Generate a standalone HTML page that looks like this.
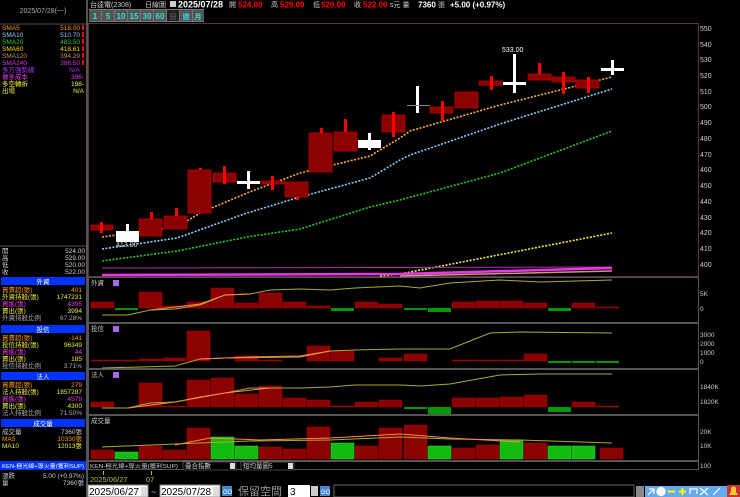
<!DOCTYPE html>
<html><head><meta charset="utf-8"><style>
html,body{margin:0;padding:0;background:#000;width:740px;height:497px;overflow:hidden}
svg text{font-family:"Liberation Sans","Noto Sans CJK TC",sans-serif}
</style></head><body>
<svg width="740" height="497" xmlns="http://www.w3.org/2000/svg" font-size="7">
<rect width="740" height="497" fill="#000"/>
<rect x="86" y="0" width="2" height="497" fill="#555"/>
<text x="43" y="13" fill="#aaa" text-anchor="middle" font-size="7">2025/07/28(一)</text>
<line x1="0" y1="24" x2="86" y2="24" stroke="#555"/>
<g font-size="6.5">
<text x="2" y="30" fill="#f90">SMA5</text><text x="80" y="30" fill="#f90" text-anchor="end">518.00</text>
<text x="2" y="37" fill="#8cf">SMA10</text><text x="80" y="37" fill="#8cf" text-anchor="end">510.70</text>
<text x="2" y="44" fill="#2c2">SMA20</text><text x="80" y="44" fill="#2c2" text-anchor="end">483.50</text>
<text x="2" y="51" fill="#fd0">SMA60</text><text x="80" y="51" fill="#fd0" text-anchor="end">418.61</text>
<text x="2" y="58" fill="#c86">SMA120</text><text x="80" y="58" fill="#c86" text-anchor="end">394.29</text>
<text x="2" y="65" fill="#d3d">SMA240</text><text x="80" y="65" fill="#d3d" text-anchor="end">388.50</text>
<text x="2" y="72" fill="#a3f">多方強勢線</text><text x="80" y="72" fill="#a3f" text-anchor="end">N/A</text>
<text x="2" y="79" fill="#e3e">做多成本</text><text x="84" y="79" fill="#e3e" text-anchor="end">396-</text>
<text x="2" y="86" fill="#ee3">多空轉折</text><text x="84" y="86" fill="#ee3" text-anchor="end">198-</text>
<text x="2" y="93" fill="#ee3">出場</text><text x="84" y="93" fill="#ee3" text-anchor="end">N/A</text>
<g fill="#f00"><rect x="82" y="25" width="2" height="5"/><rect x="82" y="32" width="2" height="5"/><rect x="82" y="39" width="2" height="5"/><rect x="82" y="46" width="2" height="5"/><rect x="82" y="53" width="2" height="5"/><rect x="82" y="60" width="2" height="5"/></g>
</g>
<line x1="0" y1="246" x2="86" y2="246" stroke="#555"/>
<g font-size="6.5" fill="#ccc">
<text x="2" y="253">開</text><text x="85" y="253" text-anchor="end">524.00</text>
<text x="2" y="260">高</text><text x="85" y="260" text-anchor="end">529.00</text>
<text x="2" y="267">低</text><text x="85" y="267" text-anchor="end">520.00</text>
<text x="2" y="274">收</text><text x="85" y="274" text-anchor="end">522.00</text>
</g>
<g font-size="6.5">
<rect x="1" y="277" width="84" height="8" fill="#0033ff"/><text x="43" y="284" fill="#fff" text-anchor="middle">外資</text>
<text x="2" y="292" fill="#f90">買賣超(張)</text><text x="82" y="292" fill="#f90" text-anchor="end">401</text>
<text x="2" y="299" fill="#ee3">外資持股(張)</text><text x="82" y="299" fill="#ee3" text-anchor="end">1747231</text>
<text x="2" y="306" fill="#e3e">買進(張)</text><text x="82" y="306" fill="#e3e" text-anchor="end">4395</text>
<text x="2" y="313" fill="#ee3">賣出(張)</text><text x="82" y="313" fill="#ee3" text-anchor="end">3994</text>
<text x="2" y="320" fill="#aaa">外資持股比例</text><text x="82" y="320" fill="#aaa" text-anchor="end">67.28%</text>
<rect x="1" y="325" width="84" height="8" fill="#0033ff"/><text x="43" y="332" fill="#fff" text-anchor="middle">投信</text>
<text x="2" y="340" fill="#f90">買賣超(張)</text><text x="82" y="340" fill="#f90" text-anchor="end">-141</text>
<text x="2" y="347" fill="#ee3">投信持股(張)</text><text x="82" y="347" fill="#ee3" text-anchor="end">96349</text>
<text x="2" y="354" fill="#e3e">買進(張)</text><text x="82" y="354" fill="#e3e" text-anchor="end">44</text>
<text x="2" y="361" fill="#ee3">賣出(張)</text><text x="82" y="361" fill="#ee3" text-anchor="end">185</text>
<text x="2" y="368" fill="#aaa">投信持股比例</text><text x="82" y="368" fill="#aaa" text-anchor="end">3.71%</text>
<rect x="1" y="372" width="84" height="8" fill="#0033ff"/><text x="43" y="379" fill="#fff" text-anchor="middle">法人</text>
<text x="2" y="387" fill="#f90">買賣超(張)</text><text x="82" y="387" fill="#f90" text-anchor="end">279</text>
<text x="2" y="394" fill="#ee3">法人持股(張)</text><text x="82" y="394" fill="#ee3" text-anchor="end">1857287</text>
<text x="2" y="401" fill="#e3e">買進(張)</text><text x="82" y="401" fill="#e3e" text-anchor="end">4579</text>
<text x="2" y="408" fill="#ee3">賣出(張)</text><text x="82" y="408" fill="#ee3" text-anchor="end">4300</text>
<text x="2" y="415" fill="#aaa">法人持股比例</text><text x="82" y="415" fill="#aaa" text-anchor="end">71.50%</text>
<rect x="1" y="419" width="84" height="8" fill="#0033ff"/><text x="43" y="426" fill="#fff" text-anchor="middle">成交量</text>
<text x="2" y="434" fill="#ccc">成交量</text><text x="82" y="434" fill="#ccc" text-anchor="end">7360張</text>
<text x="2" y="441" fill="#f90">MA5</text><text x="82" y="441" fill="#f90" text-anchor="end">10330張</text>
<text x="2" y="448" fill="#ee3">MA10</text><text x="82" y="448" fill="#ee3" text-anchor="end">12013張</text>
<rect x="0" y="461" width="86" height="9" fill="#0033ff"/><text x="2" y="468" fill="#fff" font-size="5.5" textLength="82" lengthAdjust="spacingAndGlyphs">KEN-極光線+導火量(獲利SUP)</text>
<text x="2" y="478" fill="#ccc">漲跌</text><text x="84" y="478" fill="#ccc" text-anchor="end">5.00 (+0.97%)</text>
<text x="2" y="485" fill="#ccc">量</text><text x="84" y="485" fill="#ccc" text-anchor="end">7360張</text>
</g>
<g font-size="7">
<text x="90" y="7" fill="#ccc">台達電(2308)</text>
<text x="145" y="7" fill="#ccc">日線圖</text>
<rect x="170" y="1" width="6" height="6" fill="#ccc"/>
<text x="178" y="7.5" fill="#fff" font-weight="bold" font-size="9">2025/07/28</text>
<text x="229" y="7" fill="#ccc">開</text><text x="238" y="7.5" fill="#f00" font-weight="bold" font-size="8">524.00</text>
<text x="271" y="7" fill="#ccc">高</text><text x="280" y="7.5" fill="#f00" font-weight="bold" font-size="8">529.00</text>
<text x="313" y="7" fill="#ccc">低</text><text x="321" y="7.5" fill="#f00" font-weight="bold" font-size="8">520.00</text>
<text x="354" y="7" fill="#ccc">收</text><text x="363" y="7.5" fill="#f00" font-weight="bold" font-size="8">522.00</text>
<text x="390" y="7" fill="#ccc">s元 量</text><text x="418" y="7.5" fill="#fff" font-weight="bold" font-size="8">7360</text>
<text x="438" y="7" fill="#ccc">張</text><text x="450" y="7.5" fill="#fff" font-weight="bold" font-size="8">+5.00 (+0.97%)</text>
</g>
<g font-size="8" font-weight="bold" fill="#3dd">
<rect x="89" y="9" width="115" height="13" fill="#777"/>
<rect x="89" y="10" width="12" height="11" fill="#555"/><text x="95" y="19" text-anchor="middle">1</text>
<rect x="102" y="10" width="12" height="11" fill="#555"/><text x="108" y="19" text-anchor="middle">5</text>
<rect x="115" y="10" width="12" height="11" fill="#555"/><text x="121" y="19" text-anchor="middle">10</text>
<rect x="128" y="10" width="12" height="11" fill="#555"/><text x="134" y="19" text-anchor="middle">15</text>
<rect x="141" y="10" width="12" height="11" fill="#555"/><text x="147" y="19" text-anchor="middle">30</text>
<rect x="154" y="10" width="12" height="11" fill="#555"/><text x="160" y="19" text-anchor="middle">60</text>
<rect x="167" y="10" width="12" height="11" fill="#222"/><text x="173" y="19" text-anchor="middle" fill="#555" font-size="7">日</text>
<rect x="180" y="10" width="12" height="11" fill="#555"/><text x="186" y="19" text-anchor="middle" font-size="7">週</text>
<rect x="193" y="10" width="11" height="11" fill="#555"/><text x="198" y="19" text-anchor="middle" font-size="7">月</text>
</g>
<rect x="88.5" y="23.5" width="610" height="253" fill="none" stroke="#553344"/>
<g font-size="7" fill="#ccc">
<text x="700" y="31">550</text><text x="700" y="47">540</text><text x="700" y="62">530</text><text x="700" y="78">520</text><text x="700" y="94">510</text><text x="700" y="109">500</text><text x="700" y="125">490</text><text x="700" y="141">480</text><text x="700" y="157">470</text><text x="700" y="172">460</text><text x="700" y="188">450</text><text x="700" y="204">440</text><text x="700" y="220">430</text><text x="700" y="235">420</text><text x="700" y="251">410</text><text x="700" y="267">400</text>
</g>
<g fill="none" stroke-width="1.6" stroke-dasharray="2,1.5">
<polyline stroke="#fa4" points="102,237 177,227 200,213 247,193 300,173 370,156 400,138 410,131 500,105 612,77"/>
<polyline stroke="#8cf" points="102,249 177,238 247,213 300,197 370,178 400,160 410,155 500,124 612,89"/>
<polyline stroke="#2c2" points="102,261 177,251 247,237 300,229 370,207 400,200 500,173 612,131"/>
<polyline stroke="#ee3" points="380,276 400,274 612,233"/>
</g>
<line x1="102" y1="268" x2="612" y2="267" stroke="#a3a" stroke-width="1"/>
<polyline points="102,275 400,274 612,268" stroke="#e3e" stroke-width="2.5" fill="none"/>
<polyline points="400,276 612,271" stroke="#c97" stroke-width="1.5" fill="none"/>
<g fill="#8b0000" stroke="#b00" stroke-width="0.8">
<rect x="91" y="225" width="22" height="5"/>
<rect x="139" y="219" width="23" height="17"/>
<rect x="164" y="216" width="23" height="13"/>
<rect x="188" y="170" width="23" height="43"/>
<rect x="213" y="173" width="23" height="9"/>
<rect x="261" y="181" width="23" height="3"/>
<rect x="285" y="182" width="23" height="15"/>
<rect x="309" y="133" width="23" height="39"/>
<rect x="334" y="132" width="23" height="19"/>
<rect x="382" y="115" width="23" height="17"/>
<rect x="430" y="107" width="23" height="6"/>
<rect x="455" y="92" width="23" height="16"/>
<rect x="479" y="81" width="23" height="4"/>
<rect x="528" y="74" width="23" height="6"/>
<rect x="552" y="77" width="23" height="5"/>
<rect x="576" y="80" width="23" height="8"/>
</g>
<g fill="#f00">
<rect x="100" y="222" width="3" height="11"/>
<rect x="150" y="212" width="3" height="7"/>
<rect x="175" y="208" width="3" height="8"/>
<rect x="199" y="168" width="3" height="2"/>
<rect x="223" y="166" width="3" height="18"/>
<rect x="271" y="176" width="3" height="14"/>
<rect x="296" y="197" width="3" height="3"/>
<rect x="320" y="128" width="3" height="5"/>
<rect x="344" y="119" width="3" height="13"/>
<rect x="392" y="112" width="3" height="25"/>
<rect x="441" y="101" width="3" height="20"/>
<rect x="490" y="76" width="3" height="14"/>
<rect x="538" y="63" width="3" height="11"/>
<rect x="562" y="72" width="3" height="22"/>
<rect x="587" y="77" width="3" height="16"/>
</g>
<g fill="#fff">
<rect x="116" y="231" width="23" height="11"/><rect x="126" y="224" width="3" height="7"/>
<rect x="237" y="181" width="23" height="3"/><rect x="247" y="171" width="3" height="18"/>
<rect x="358" y="140" width="23" height="8"/><rect x="368" y="133" width="3" height="17"/>
<rect x="416" y="86" width="3" height="27"/>
<rect x="503" y="82" width="23" height="3"/><rect x="513" y="54" width="3" height="39"/>
<rect x="601" y="68" width="23" height="3"/><rect x="611" y="60" width="3" height="15"/>
</g>
<rect x="407" y="105" width="23" height="1" fill="#888"/>
<text x="116" y="247" fill="#ccc" font-size="7">413.00</text>
<text x="502" y="52" fill="#fff" font-size="7">533.00</text>
<g fill="none" stroke="#555">
<rect x="88.5" y="277.5" width="610" height="45"/>
<rect x="88.5" y="323.5" width="610" height="45"/>
<rect x="88.5" y="369.5" width="610" height="45"/>
<rect x="88.5" y="415.5" width="610" height="45"/>
<rect x="88.5" y="461.5" width="610" height="8"/>
</g>
<g font-size="6.5" fill="#ccc">
<text x="91" y="285">外資</text><text x="91" y="331">投信</text><text x="91" y="377">法人</text><text x="91" y="423">成交量</text>
<text x="700" y="296">5K</text><text x="700" y="311">0</text>
<text x="700" y="337">3000</text><text x="700" y="346">2000</text><text x="700" y="355">1000</text><text x="700" y="364">0</text>
<text x="700" y="389">1840K</text><text x="700" y="404">1820K</text>
<text x="700" y="434">20K</text><text x="700" y="448">10K</text><text x="700" y="468">100</text>
</g>
<g fill="#a6e"><rect x="113" y="280" width="6" height="6"/><rect x="113" y="326" width="6" height="6"/><rect x="113" y="372" width="6" height="6"/></g>
<g fill="#8b0000" stroke="#a00" stroke-width="0.5">
<rect x="91" y="302" width="23" height="6"/><rect x="139" y="292" width="23" height="16"/><rect x="163" y="306" width="23" height="2"/><rect x="187" y="302" width="23" height="6"/><rect x="211" y="288" width="23" height="20"/><rect x="235" y="303" width="23" height="5"/><rect x="259" y="293" width="23" height="15"/><rect x="283" y="302" width="23" height="6"/><rect x="307" y="306" width="23" height="2"/><rect x="355" y="302" width="23" height="6"/><rect x="379" y="304" width="23" height="4"/><rect x="452" y="302" width="23" height="6"/><rect x="476" y="301" width="23" height="7"/><rect x="500" y="301" width="23" height="7"/><rect x="524" y="303" width="23" height="5"/><rect x="572" y="303" width="23" height="5"/><rect x="596" y="307" width="23" height="1"/>
</g>
<g fill="#090"><rect x="115" y="308" width="23" height="2"/><rect x="331" y="308" width="23" height="3"/><rect x="404" y="308" width="23" height="2"/><rect x="428" y="308" width="23" height="4"/><rect x="548" y="308" width="23" height="3"/></g>
<polyline fill="none" stroke="#aa3" points="102,315 128,315 150,310 175,309 200,305 225,295 250,294 270,290 300,289 330,290 355,288 400,286 420,288 450,283 500,280 540,282 612,280"/>
<polyline fill="none" stroke="#f84" points="150,310 200,304 225,295 250,294"/>
<g fill="#8b0000" stroke="#a00" stroke-width="0.5">
<rect x="91" y="360" width="23" height="1"/><rect x="115" y="360" width="23" height="1"/><rect x="139" y="359" width="23" height="2"/><rect x="163" y="358" width="23" height="3"/><rect x="187" y="331" width="23" height="30"/><rect x="235" y="356" width="23" height="5"/><rect x="259" y="360" width="23" height="1"/><rect x="307" y="346" width="23" height="15"/><rect x="331" y="351" width="23" height="10"/><rect x="379" y="358" width="23" height="3"/><rect x="404" y="354" width="23" height="7"/><rect x="452" y="360" width="23" height="1"/><rect x="476" y="360" width="23" height="1"/><rect x="500" y="360" width="23" height="1"/><rect x="524" y="354" width="23" height="7"/>
</g>
<g fill="#090"><rect x="548" y="361" width="23" height="2"/><rect x="572" y="361" width="23" height="2"/><rect x="596" y="361" width="23" height="2"/></g>
<polyline fill="none" stroke="#aa3" points="102,368 175,366 200,359 225,358 300,357 330,351 355,350 400,349 450,349 490,333 520,332 612,333"/>
<polyline fill="none" stroke="#f84" points="200,359 250,357 300,356 330,351"/>
<g fill="#8b0000" stroke="#a00" stroke-width="0.5">
<rect x="91" y="402" width="23" height="5"/><rect x="139" y="383" width="23" height="24"/><rect x="163" y="406" width="23" height="1"/><rect x="187" y="380" width="23" height="27"/><rect x="211" y="378" width="23" height="29"/><rect x="235" y="394" width="23" height="13"/><rect x="259" y="386" width="23" height="21"/><rect x="283" y="398" width="23" height="9"/><rect x="307" y="400" width="23" height="7"/><rect x="331" y="406" width="23" height="1"/><rect x="355" y="402" width="23" height="5"/><rect x="379" y="400" width="23" height="7"/><rect x="452" y="398" width="23" height="9"/><rect x="476" y="398" width="23" height="9"/><rect x="500" y="397" width="23" height="10"/><rect x="524" y="395" width="23" height="12"/><rect x="572" y="402" width="23" height="5"/><rect x="596" y="406" width="23" height="1"/>
</g>
<g fill="#090"><rect x="404" y="407" width="23" height="2"/><rect x="428" y="407" width="23" height="7"/><rect x="548" y="407" width="23" height="5"/></g>
<polyline fill="none" stroke="#aa3" points="102,408 128,408 150,403 175,402 200,397 225,393 250,388 270,388 300,388 330,387 355,385 400,385 420,386 450,384 500,375 540,374 612,374"/>
<polyline fill="none" stroke="#f84" points="128,408 175,402 225,393 270,388"/>
<g fill="#8b0000" stroke="#a00" stroke-width="0.5">
<rect x="91" y="450" width="23" height="9"/><rect x="139" y="446" width="23" height="13"/><rect x="163" y="450" width="23" height="9"/><rect x="187" y="428" width="23" height="31"/><rect x="259" y="447" width="23" height="12"/><rect x="283" y="449" width="23" height="10"/><rect x="307" y="427" width="23" height="32"/><rect x="355" y="446" width="23" height="13"/><rect x="379" y="428" width="23" height="31"/><rect x="404" y="425" width="23" height="34"/><rect x="452" y="448" width="23" height="11"/><rect x="476" y="445" width="23" height="14"/><rect x="524" y="443" width="23" height="16"/><rect x="600" y="448" width="23" height="11"/>
</g>
<g fill="#1b1" stroke="#3d3" stroke-width="0.5">
<rect x="115" y="452" width="23" height="7"/><rect x="211" y="437" width="23" height="22"/><rect x="235" y="446" width="23" height="13"/><rect x="331" y="443" width="23" height="16"/><rect x="428" y="446" width="23" height="13"/><rect x="500" y="440" width="23" height="19"/><rect x="548" y="446" width="23" height="13"/><rect x="572" y="446" width="23" height="13"/>
</g>
<polyline fill="none" stroke="#aa3" points="102,447 175,444 250,441 330,440 400,437 450,439 520,440 612,443"/>
<polyline fill="none" stroke="#f84" points="175,445 210,438 260,440 330,438 400,434 450,438 520,442"/>
<g font-size="6.5">
<text x="90" y="468" fill="#ccc" font-size="5.5" textLength="88" lengthAdjust="spacingAndGlyphs">KEN-極光線+導火量(獲利SUP)</text>
<rect x="183" y="462" width="53" height="8" fill="#000" stroke="#888" stroke-width="0.5"/><text x="185" y="468" fill="#ccc">疊合指數</text><rect x="230" y="463" width="5" height="6" fill="#ddd"/>
<rect x="241" y="462" width="53" height="8" fill="#000" stroke="#888" stroke-width="0.5"/><text x="243" y="468" fill="#ccc">短均量圖5</text><rect x="288" y="463" width="5" height="6" fill="#ddd"/>
<rect x="103" y="471" width="1" height="4" fill="#bb3"/><rect x="151" y="471" width="1" height="4" fill="#bb3"/>
<text x="90" y="482" fill="#bb3" font-size="7.5">2025/06/27</text><text x="146" y="482" fill="#bb3" font-size="7.5">07</text>
</g>
<rect x="88" y="485" width="60" height="12" fill="#fff" stroke="#888"/><text x="89" y="495" font-size="10" fill="#000" textLength="50">2025/06/27</text><rect x="141" y="487" width="6" height="9" fill="#ddd"/>
<text x="151" y="495" font-size="9" fill="#ccc">~</text>
<rect x="160" y="485" width="60" height="12" fill="#fff" stroke="#888"/><text x="161" y="495" font-size="10" fill="#000" textLength="50">2025/07/28</text><rect x="213" y="487" width="6" height="9" fill="#ddd"/>
<rect x="222" y="486" width="10" height="10" fill="#48c"/><text x="223" y="494" font-size="6" fill="#fff">GO</text>
<text x="238" y="495" font-size="11" fill="#999">保留空間</text>
<rect x="288" y="485" width="22" height="12" fill="#fff"/><text x="290" y="495" font-size="10" fill="#000">3</text>
<rect x="311" y="486" width="7" height="10" fill="#ccc"/>
<rect x="320" y="486" width="10" height="10" fill="#48c"/><text x="321" y="494" font-size="6" fill="#fff">GO</text>
<rect x="334" y="485" width="300" height="12" fill="#000" stroke="#666"/>
<rect x="636" y="486" width="8" height="11" fill="#888"/>
<rect x="645" y="486" width="82" height="11" fill="#6ae"/>
<rect x="727" y="485" width="13" height="12" fill="#c33"/>
<g stroke="#fff" stroke-width="1.2" fill="none">
<path d="M648 495 L654 489 M649 489 H654 V494"/>
<circle cx="661" cy="491.5" r="4" fill="#fff"/>
<path d="M668 491.5 H675" stroke="#ff0" stroke-width="2"/>
<path d="M679 491.5 H686 M682.5 488 V495" stroke="#ff0" stroke-width="2"/>
<path d="M690 494 V489 H697 V494"/>
<path d="M700 488 L708 495 M708 488 L700 495"/>
<path d="M713 495 L720 488"/>
</g>
<path d="M729 495 H738 L736 492 V489 A2.5 2.5 0 0 0 731 489 V492 Z" fill="#fc3"/>
</svg>
</body></html>
